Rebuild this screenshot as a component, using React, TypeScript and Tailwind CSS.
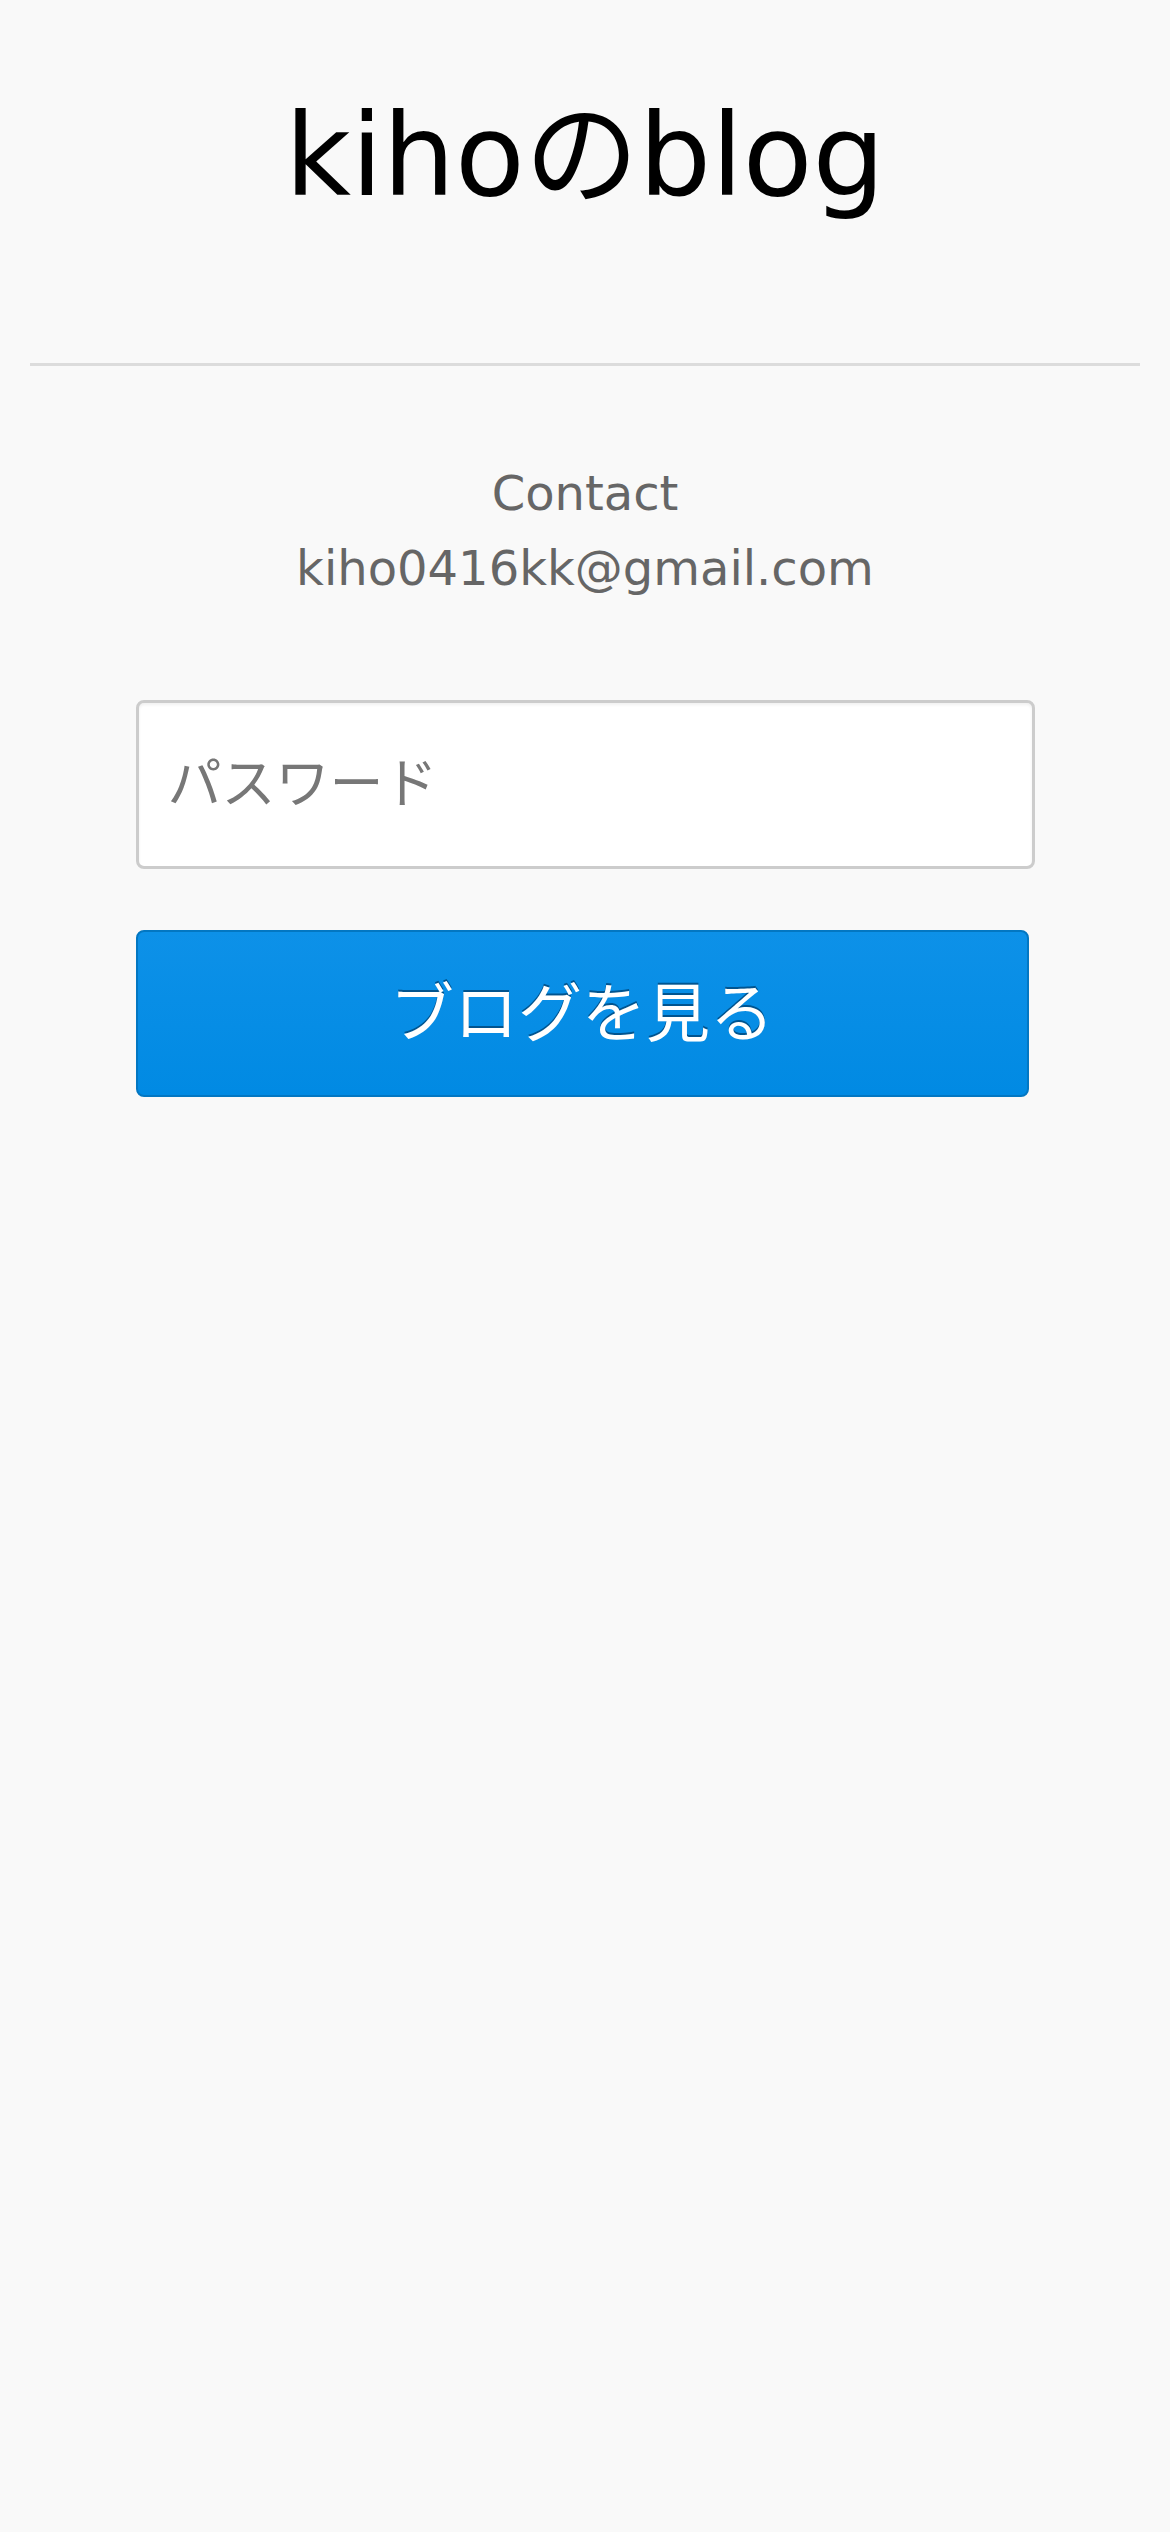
import React, { useState } from "react";

const font = "font-['DejaVu_Sans','Noto_Sans_CJK_JP',sans-serif]";

const App: React.FC = () => {
  const [password, setPassword] = useState("");

  return (
    <div className={`min-h-screen w-full bg-[#f9f9f9] ${font}`}>
      <header className="pt-[91px] pb-[142px] text-center">
        <h1 className="text-[114px] leading-[130px] text-black">kihoのblog</h1>
      </header>
      <hr className="mx-[30px] border-0 border-t-[3px] border-[#dcdcdc]" />
      <div className="mt-[90px] text-center text-[48px] leading-[75px] text-[#666666]">
        <p>Contact</p>
        <p>kiho0416kk@gmail.com</p>
      </div>
      <form
        className="mx-auto mt-[94px] w-[899px]"
        onSubmit={(e) => e.preventDefault()}
      >
        <input
          type="password"
          value={password}
          onChange={(e) => setPassword(e.target.value)}
          placeholder="パスワード"
          className="block h-[169px] w-full rounded-[8px] border-[3px] border-[#cccccc] bg-white px-[29px] text-[54px] text-[#333] shadow-[inset_0_2px_3px_rgba(0,0,0,0.06)] outline-none placeholder:text-[#777777]"
        />
        <button
          type="submit"
          className="mt-[61px] block h-[167px] w-[893px] rounded-[8px] border-2 border-[#0377c2] bg-gradient-to-b from-[#0d91e8] to-[#018ae3] text-[64px] text-white [text-shadow:0_-2px_0_#01548f]"
        >
          ブログを見る
        </button>
      </form>
    </div>
  );
};

export default App;
